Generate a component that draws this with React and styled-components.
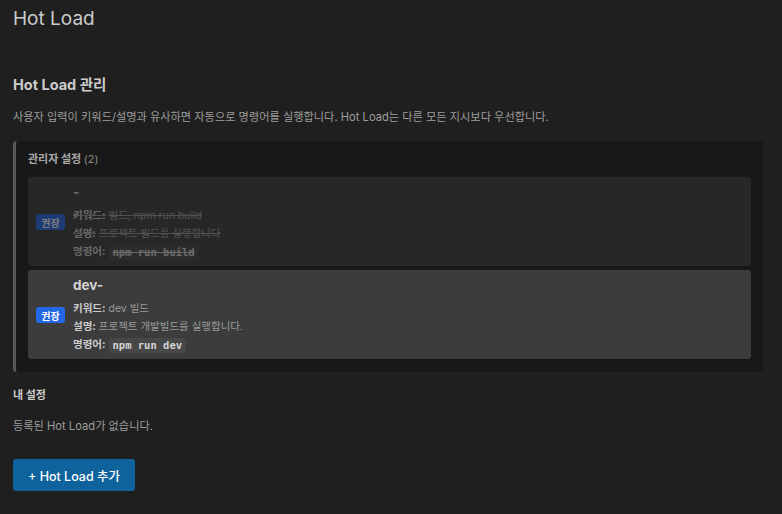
import React from "react";
import styled, { createGlobalStyle } from "styled-components";

const GlobalStyle = createGlobalStyle`
  html, body {
    margin: 0;
    padding: 0;
    background: #1f1f1f;
  }
  body {
    font-family: Inter, "Noto Sans CJK KR", "Noto Sans", sans-serif;
    color: #cccccc;
    -webkit-font-smoothing: antialiased;
  }
`;

const Page = styled.div`
  min-height: 514px;
  box-sizing: border-box;
  padding: 6px 19px 20px 13px;
  background: #1f1f1f;
`;

const PageTitle = styled.h1`
  margin: 0;
  font-size: 19px;
  line-height: 26px;
  font-weight: 400;
  color: #cccccc;
`;

const SectionTitle = styled.h2`
  margin: 43px 0 0;
  font-size: 14.5px;
  line-height: 20px;
  font-weight: 700;
  color: #cccccc;
`;

const Description = styled.p`
  margin: 14px 0 0;
  font-size: 11.2px;
  line-height: 16px;
  color: #9d9d9d;
`;

const AdminBox = styled.section`
  margin-top: 16px;
  background: #181818;
  border-left: 3px solid #5a5a5a;
  border-radius: 4px;
  padding: 10px 12px 13px 12px;
  display: flex;
  flex-direction: column;
  gap: 4px;
`;

const GroupLabel = styled.div`
  font-size: 11px;
  line-height: 16px;
  font-weight: 700;
  color: #a8a8a8;
  margin-bottom: 6px;

  span {
    font-weight: 400;
    color: #8a8a8a;
  }
`;

const Card = styled.div`
  display: flex;
  align-items: center;
  gap: 8px;
  padding: 6px 8px 5px 8px;
  border-radius: 3px;
  background: #3c3c3c;
  opacity: ${(p) => (p.$disabled ? 0.44 : 1)};
`;

const Badge = styled.span`
  flex: none;
  width: 29px;
  height: 16px;
  border-radius: 3px;
  background: #2468ea;
  color: #ffffff;
  font-size: 10px;
  font-weight: 700;
  display: flex;
  align-items: center;
  justify-content: center;
`;

const CardBody = styled.div`
  display: flex;
  flex-direction: column;
`;

const CardTitle = styled.div`
  font-size: 13.5px;
  line-height: 18px;
  font-weight: 700;
  color: #d4d4d4;
  margin-bottom: 6px;
`;

const Row = styled.div`
  font-size: 10.5px;
  line-height: 18px;
  color: #9a9a9a;
  text-decoration: ${(p) => (p.$struck ? "line-through" : "none")};
  display: flex;
  align-items: center;
  gap: 3px;
`;

const Label = styled.b`
  font-weight: 700;
  color: #cccccc;
`;

const Code = styled.code`
  font-family: "DejaVu Sans Mono", "Liberation Mono", monospace;
  font-size: 10.5px;
  font-weight: 700;
  line-height: 15px;
  color: #d4d4d4;
  background: rgba(255, 255, 255, 0.06);
  border-radius: 3px;
  padding: 0 4px;
  text-decoration: ${(p) => (p.$struck ? "line-through" : "none")};
`;

const SubTitle = styled.h3`
  margin: 15px 0 0;
  font-size: 11px;
  line-height: 16px;
  font-weight: 700;
  color: #cccccc;
`;

const Empty = styled.p`
  margin: 15px 0 0;
  font-size: 11.2px;
  line-height: 16px;
  color: #9d9d9d;
`;

const AddButton = styled.button`
  margin-top: 25px;
  height: 32px;
  padding: 0 15px;
  border: none;
  border-radius: 3px;
  background: #0e639c;
  color: #ffffff;
  font-family: inherit;
  font-size: 12.5px;
  font-weight: 500;
  cursor: pointer;
`;

const entries = [
  {
    title: "-",
    keywords: "빌드, npm run build",
    description: "프로젝트 빌드를 실행합니다",
    command: "npm run build",
    disabled: true,
  },
  {
    title: "dev-",
    keywords: "dev 빌드",
    description: "프로젝트 개발빌드를 실행합니다.",
    command: "npm run dev",
    disabled: false,
  },
];

function EntryCard({ entry }) {
  const s = entry.disabled;
  return (
    <Card $disabled={s}>
      <Badge>권장</Badge>
      <CardBody>
        <CardTitle>{entry.title}</CardTitle>
        <Row $struck={s}>
          <Label>키워드:</Label> {entry.keywords}
        </Row>
        <Row $struck={s}>
          <Label>설명:</Label> {entry.description}
        </Row>
        <Row>
          <Label>명령어:</Label> <Code $struck={s}>{entry.command}</Code>
        </Row>
      </CardBody>
    </Card>
  );
}

export default function App() {
  return (
    <>
      <GlobalStyle />
      <Page>
        <PageTitle>Hot Load</PageTitle>
        <SectionTitle>Hot Load 관리</SectionTitle>
        <Description>
          사용자 입력이 키워드/설명과 유사하면 자동으로 명령어를 실행합니다. Hot Load는 다른 모든 지시보다 우선합니다.
        </Description>
        <AdminBox>
          <GroupLabel>
            관리자 설정 <span>(2)</span>
          </GroupLabel>
          {entries.map((e) => (
            <EntryCard key={e.title} entry={e} />
          ))}
        </AdminBox>
        <SubTitle>내 설정</SubTitle>
        <Empty>등록된 Hot Load가 없습니다.</Empty>
        <AddButton>+ Hot Load 추가</AddButton>
      </Page>
    </>
  );
}
